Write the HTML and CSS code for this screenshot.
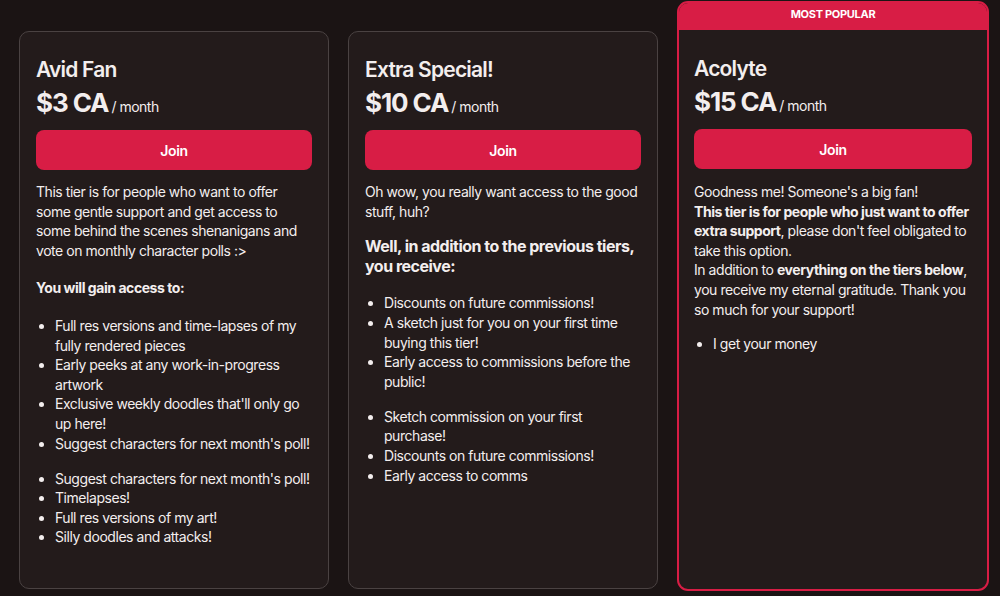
FILE: index.html
```html
<!DOCTYPE html>
<html>
<head>
<meta charset="utf-8">
<link rel="stylesheet" href="styles.css">
</head>
<body>
<div class="tiers">
  <div class="card">
    <h2 class="title">Avid Fan</h2>
    <div class="price"><span class="amount">$3 CA</span><span class="per">/ month</span></div>
    <button class="join">Join</button>
    <div class="desc">
      <p>This tier is for people who want to offer some gentle support and get access to some behind the scenes shenanigans and vote on monthly character polls :&gt;</p>
      <p class="gap"><strong>You will gain access to:</strong></p>
      <ul class="gap">
        <li>Full res versions and time-lapses of my fully rendered pieces</li>
        <li>Early peeks at any work-in-progress artwork</li>
        <li>Exclusive weekly doodles that'll only go up here!</li>
        <li>Suggest characters for next month's poll!</li>
      </ul>
      <ul class="gap2">
        <li>Suggest characters for next month's poll!</li>
        <li>Timelapses!</li>
        <li>Full res versions of my art!</li>
        <li>Silly doodles and attacks!</li>
      </ul>
    </div>
  </div>
  <div class="card wide">
    <h2 class="title">Extra Special!</h2>
    <div class="price"><span class="amount">$10 CA</span><span class="per">/ month</span></div>
    <button class="join">Join</button>
    <div class="desc">
      <p>Oh wow, you really want access to the good stuff, huh?</p>
      <h3 class="sub">Well, in addition to the previous tiers, you receive:</h3>
      <ul class="gap">
        <li>Discounts on future commissions!</li>
        <li>A sketch just for you on your first time buying this tier!</li>
        <li>Early access to commissions before the public!</li>
      </ul>
      <ul class="gap2">
        <li>Sketch commission on your first purchase!</li>
        <li>Discounts on future commissions!</li>
        <li>Early access to comms</li>
      </ul>
    </div>
  </div>
  <div class="card featured">
    <div class="badge">MOST POPULAR</div>
    <div class="inner">
      <h2 class="title">Acolyte</h2>
      <div class="price"><span class="amount">$15 CA</span><span class="per">/ month</span></div>
      <button class="join">Join</button>
      <div class="desc">
        <p>Goodness me! Someone's a big fan!<br><strong>This tier is for people who just want to offer extra support</strong>, please don't feel obligated to take this option.<br>In addition to <strong>everything on the tiers below</strong>, you receive my eternal gratitude. Thank you so much for your support!</p>
        <ul class="gap3">
          <li>I get your money</li>
        </ul>
      </div>
    </div>
  </div>
</div>
</body>
</html>
```

FILE: styles.css
```css
html, body {
  margin: 0;
  padding: 0;
  background: #1b1414;
  font-family: Inter, "Noto Sans", sans-serif;
  color: #f3eeee;
}
.tiers {
  display: flex;
  gap: 19px;
  padding: 1px 0 0 19px;
  align-items: flex-start;
}
.card {
  box-sizing: border-box;
  width: 310px;
  height: 558px;
  margin-top: 30px;
  background: #231b1b;
  border: 1px solid #4a4242;
  border-radius: 10px;
  padding: 24px 16px 0 16px;
}
.card.featured {
  width: 312px;
  height: 590px;
  margin-top: 0;
  border: 2px solid #d81d45;
  border-radius: 11px;
  padding: 0;
  overflow: hidden;
}
.badge {
  background: #d81d45;
  color: #fff;
  font-size: 11px;
  font-weight: 700;
  text-align: center;
  height: 27px;
  line-height: 23px;
  letter-spacing: -0.3px;
}
.inner {
  padding: 25px 15px 0 15px;
}
.title {
  margin: 0;
  font-size: 21px;
  font-weight: 600;
  line-height: 28px;
  letter-spacing: -0.8px;
}
.price {
  margin-top: 3px;
  display: flex;
  align-items: baseline;
  height: 34px;
}
.amount {
  font-size: 26px;
  font-weight: 700;
  letter-spacing: -1.1px;
}
.per {
  font-size: 14px;
  margin-left: 3px;
  letter-spacing: -0.5px;
}
.join {
  display: block;
  width: 100%;
  height: 40px;
  margin-top: 9px;
  border: none;
  border-radius: 8px;
  background: #d81d45;
  color: #fff;
  font-family: inherit;
  font-size: 14px;
  font-weight: 600;
  letter-spacing: -0.3px;
}
.desc {
  margin-top: 12px;
  font-size: 14px;
  line-height: 19.6px;
  letter-spacing: -0.45px;
}
.featured .desc {
  margin-top: 13px;
}
.desc p {
  margin: 0;
}
.desc strong {
  font-weight: 700;
}
.desc .gap {
  margin-top: 18px;
}
.desc .gap2 {
  margin-top: 15.5px;
}
.desc .gap3 {
  margin-top: 15px;
}
.sub {
  margin: 16px 0 0 0;
  font-size: 16px;
  line-height: 19.6px;
  font-weight: 700;
  letter-spacing: -0.5px;
}
.sub + .gap {
  margin-top: 17px;
}
ul {
  margin: 0;
  padding-left: 19px;
}
li {
  margin: 0;
}
```
